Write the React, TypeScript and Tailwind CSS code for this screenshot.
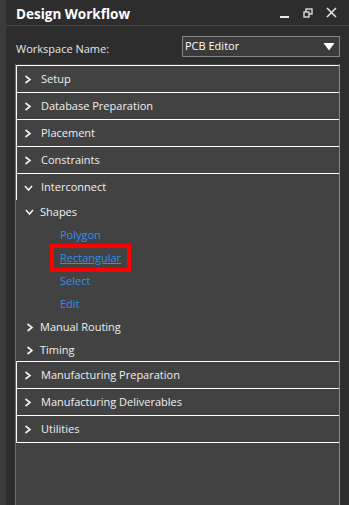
import React from "react";

const font = { fontFamily: '"Open Sans", "Noto Sans", sans-serif' };

function Right() {
  return (
    <svg width="8" height="9" viewBox="0 0 8 9" className="shrink-0">
      <polyline points="1.5,1 6,4.5 1.5,8" fill="none" stroke="#f2f2f2" strokeWidth="1.6" />
    </svg>
  );
}
function Down() {
  return (
    <svg width="9" height="8" viewBox="0 0 9 8" className="shrink-0">
      <polyline points="1,2 4.5,6 8,2" fill="none" stroke="#f2f2f2" strokeWidth="1.6" />
    </svg>
  );
}

function BoxRow({ label, open }: { label: string; open?: boolean }) {
  return (
    <div className="h-[27px] flex items-center border-t border-white pt-[1px]">
      <div className="w-[8px] ml-[7px] flex justify-center">{open ? <Down /> : <Right />}</div>
      <span className="ml-[9px] text-[11px] text-[#f0f0f0]">{label}</span>
    </div>
  );
}

function PlainRow({ label, open }: { label: string; open?: boolean }) {
  return (
    <div className="h-[23px] flex items-center pl-[8px] pt-[1px]">
      <div className="w-[9px] flex justify-center">{open ? <Down /> : <Right />}</div>
      <span className="ml-[6px] text-[11px] text-[#f0f0f0]">{label}</span>
    </div>
  );
}

function Link({ label, selected }: { label: string; selected?: boolean }) {
  return (
    <div className="h-[23px] flex items-center pl-[33px] pt-[1px]">
      <div
        className={`h-[28px] flex items-center px-[6px] border-4 ${selected ? "border-[#ff0000]" : "border-transparent"}`}
      >
        <span className={`text-[11px] text-[#2f8ff2] ${selected ? "underline" : ""}`}>{label}</span>
      </div>
    </div>
  );
}

export default function App() {
  return (
    <div className="w-[349px] h-[505px] flex bg-[#2b2b2b] overflow-hidden" style={font}>
      <div className="w-[6px] h-full bg-[#3c3c3c]" />
      <div className="flex-1 flex flex-col bg-[#2d2d2d]">
        <div className="h-[26px] flex items-center border-b border-[#444444] pl-[10px] pr-[12px] pt-[3px]">
          <span className="text-[13.5px] font-bold text-white">Design Workflow</span>
          <div className="ml-auto flex items-center -mt-[3px]">
            <svg width="11" height="12" viewBox="0 0 11 12" className="mr-[13px]">
              <rect x="1" y="9" width="9" height="2" fill="#e8e8e8" />
            </svg>
            <svg width="10" height="10" viewBox="0 0 10 10" className="mr-[13px]">
              <rect x="3" y="1" width="6" height="5" fill="none" stroke="#e8e8e8" strokeWidth="1.3" />
              <rect x="1" y="4" width="5" height="5" fill="#2d2d2d" stroke="#e8e8e8" strokeWidth="1.3" />
            </svg>
            <svg width="11" height="11" viewBox="0 0 11 11">
              <path d="M1 1 L10 10 M10 1 L1 10" stroke="#e8e8e8" strokeWidth="1.5" />
            </svg>
          </div>
        </div>
        <div className="h-[38px] flex items-start pt-[10px] pl-[10px] pr-[9px]">
          <span className="text-[11px] text-[#e6e6e6] mt-[5px]">Workspace Name:</span>
          <div className="ml-auto w-[158px] h-[21px] border border-[#858585] bg-[#3b3b3b] flex items-center pl-[2px] pr-[4px]">
            <span className="text-[11px] text-white">PCB Editor</span>
            <svg width="12" height="9" viewBox="0 0 12 9" className="ml-auto">
              <polygon points="0.5,1 11.5,1 6,8.5" fill="#ffffff" />
            </svg>
          </div>
        </div>
        <div className="flex-1 ml-[9px] mr-[9px] border-l border-r border-l-[#6e6e6e] border-r-[#8a8a8a] bg-[#424242] pt-[1px]">
          <div className="border-l border-white">
            <BoxRow label="Setup" />
            <BoxRow label="Database Preparation" />
            <BoxRow label="Placement" />
            <BoxRow label="Constraints" />
            <BoxRow label="Interconnect" open />
          </div>
          <div className="ml-[1px]">
            <PlainRow label="Shapes" open />
            <Link label="Polygon" />
            <Link label="Rectangular" selected />
            <Link label="Select" />
            <Link label="Edit" />
            <PlainRow label="Manual Routing" />
            <PlainRow label="Timing" />
          </div>
          <div className="border-l border-b border-white">
            <BoxRow label="Manufacturing Preparation" />
            <BoxRow label="Manufacturing Deliverables" />
            <BoxRow label="Utilities" />
          </div>
        </div>
      </div>
    </div>
  );
}
